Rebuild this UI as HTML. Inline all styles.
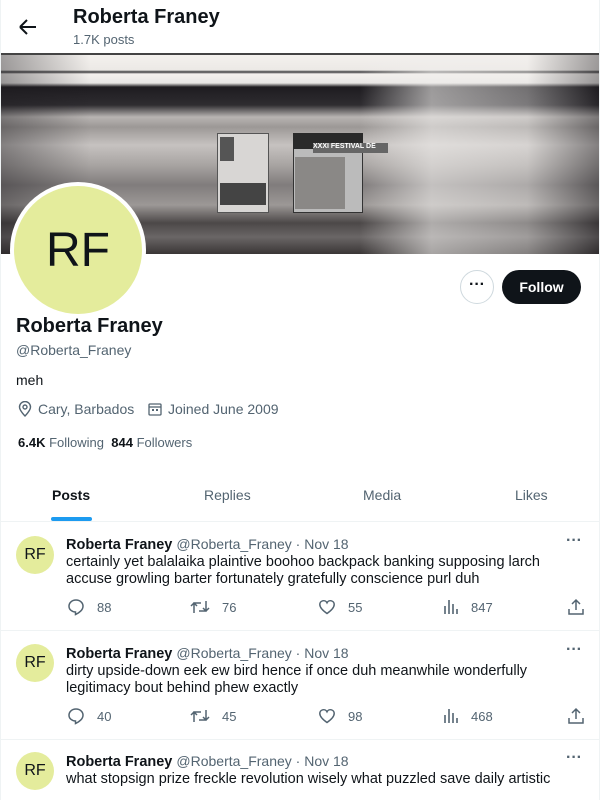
<!DOCTYPE html>
<html><head><meta charset="utf-8"><style>
*{box-sizing:border-box;margin:0;padding:0}
body{width:600px;height:800px;overflow:hidden;background:#fff;font-family:"Liberation Sans",Arial,sans-serif;color:#0f1419;position:relative}
.abs{position:absolute}
.gray{color:#536471}
.banner{left:1px;top:55px;width:598px;height:199px;overflow:hidden;
background:linear-gradient(180deg,#f4f1ee 0,#ece9e6 15px,#3a3a3c 17px,#f4f1ee 19px,#e8e6e4 28px,#1e1c20 32px,#2e2c30 50px,#b8b4b2 62px,#9c9896 72px,#c6c2c0 90px,#a8a4a2 110px,#807c7c 130px,#9c9896 150px,#4c4848 168px,#6a6666 182px,#3a3636 199px)}
.tw{position:absolute;left:0;top:0;width:100%;height:100%;background:linear-gradient(90deg,rgba(30,28,32,.4) 0,rgba(255,255,255,0) 15%,rgba(255,255,255,0) 60%,rgba(240,238,236,.6) 72%,rgba(240,238,236,.4) 88%,rgba(30,28,32,.4) 100%)}
.post{position:absolute;left:0;width:600px;border-top:1px solid #eff3f4}
.av{position:absolute;left:16px;width:38px;height:38px;border-radius:50%;background:#e4ec9c;font-size:16px;text-align:center;line-height:38px;color:#0f1419}
.name{position:absolute;left:66px;font-size:14.5px}
.name span{font-size:14px}
.txt{position:absolute;left:66px;font-size:14.5px;line-height:17px;width:520px}
.act{position:absolute;font-size:13px;color:#536471;display:flex;align-items:center;gap:12px}
svg{display:block}
</style></head><body>
<div class="abs" style="left:0;top:0;width:1px;height:800px;background:#eff3f4"></div>
<div class="abs" style="right:0;top:0;width:1px;height:800px;background:#eff3f4"></div>
<svg class="abs" style="left:18px;top:18px" width="20" height="18" viewBox="0 0 20 18"><path d="M2 9H18M2 9L9 2M2 9L9 16" stroke="#0f1419" stroke-width="2" fill="none"/></svg>
<div class="abs" style="left:73px;top:6px;font-size:20px;font-weight:bold">Roberta Franey</div>
<div class="abs gray" style="left:73px;top:32px;font-size:13px">1.7K posts</div>
<div class="abs" style="left:1px;top:53px;width:598px;height:2px;background:#444"></div>
<div class="abs banner"><div class="tw"></div>
<div class="abs" style="left:216px;top:78px;width:52px;height:80px;background:#d8d6d4;border:1px solid #555"></div>
<div class="abs" style="left:219px;top:82px;width:14px;height:24px;background:#555"></div>
<div class="abs" style="left:219px;top:128px;width:46px;height:22px;background:#444"></div>
<div class="abs" style="left:292px;top:78px;width:70px;height:80px;background:#bbb;border:1px solid #333"></div>
<div class="abs" style="left:292px;top:78px;width:70px;height:16px;background:#2a2a2a"></div>
<div class="abs" style="left:312px;top:88px;width:75px;height:10px;background:#666;font-size:7px;color:#fff;font-weight:bold">XXXI FESTIVAL DE</div>
<div class="abs" style="left:294px;top:102px;width:50px;height:52px;background:#8a8886"></div>
</div>
<div class="abs" style="left:10px;top:182px;width:136px;height:136px;border-radius:50%;background:#fff"></div>
<div class="abs" style="left:14px;top:186px;width:128px;height:128px;border-radius:50%;background:#e4ec9c;text-align:center;line-height:130px;font-size:48px">RF</div>
<div class="abs" style="left:460px;top:270px;width:34px;height:34px;border:1px solid #cfd9de;border-radius:50%;text-align:center;line-height:28px;font-weight:bold;font-size:16px">···</div>
<div class="abs" style="left:502px;top:270px;width:79px;height:34px;background:#0f1419;border-radius:17px;color:#fff;font-weight:bold;font-size:14px;text-align:center;line-height:34px">Follow</div>
<div class="abs" style="left:16px;top:315px;font-size:20px;font-weight:bold">Roberta Franey</div>
<div class="abs gray" style="left:16px;top:342px;font-size:14px">@Roberta_Franey</div>
<div class="abs" style="left:16px;top:372px;font-size:14px">meh</div>
<svg class="abs" style="left:18px;top:401px" width="14" height="16" viewBox="0 0 14 16"><path d="M7 15C7 15 1.5 9.5 1.5 6A5.5 5.5 0 0 1 12.5 6C12.5 9.5 7 15 7 15Z" stroke="#536471" stroke-width="1.4" fill="none"/><circle cx="7" cy="6" r="2" stroke="#536471" stroke-width="1.4" fill="none"/></svg>
<div class="abs gray" style="left:38px;top:401px;font-size:14px">Cary, Barbados</div>
<svg class="abs" style="left:148px;top:402px" width="14" height="14" viewBox="0 0 14 14"><rect x="1" y="2" width="12" height="11" rx="1" stroke="#536471" stroke-width="1.3" fill="none"/><path d="M1 5H13" stroke="#536471" stroke-width="1.3"/><rect x="4" y="7" width="2" height="2" fill="#536471"/><rect x="8" y="7" width="2" height="2" fill="#536471"/></svg>
<div class="abs gray" style="left:168px;top:401px;font-size:14px">Joined June 2009</div>
<div class="abs" style="left:18px;top:435px;font-size:13px"><b>6.4K</b> <span class="gray">Following</span> &nbsp;<b>844</b> <span class="gray">Followers</span></div>
<div class="abs" style="left:52px;top:487px;font-size:14px;font-weight:bold">Posts</div>
<div class="abs" style="left:51px;top:517px;width:41px;height:4px;border-radius:2px;background:#1d9bf0"></div>
<div class="abs gray" style="left:204px;top:487px;font-size:14px">Replies</div>
<div class="abs gray" style="left:363px;top:487px;font-size:14px">Media</div>
<div class="abs gray" style="left:515px;top:487px;font-size:14px">Likes</div>

<div class="post" style="top:521px;height:110px">
<div class="av" style="top:14px">RF</div>
<div class="name" style="top:14px"><b>Roberta Franey</b> <span class="gray">@Roberta_Franey · Nov 18</span></div>
<div class="abs gray" style="left:566px;top:10px;font-weight:bold">···</div>
<div class="txt" style="top:32px">certainly yet balalaika plaintive boohoo backpack banking supposing larch accuse growling barter fortunately gratefully conscience purl duh</div>
</div>
<div class="post" style="top:630px;height:110px">
<div class="av" style="top:13px">RF</div>
<div class="name" style="top:14px"><b>Roberta Franey</b> <span class="gray">@Roberta_Franey · Nov 18</span></div>
<div class="abs gray" style="left:566px;top:10px;font-weight:bold">···</div>
<div class="txt" style="top:32px">dirty upside-down eek ew bird hence if once duh meanwhile wonderfully legitimacy bout behind phew exactly</div>
</div>
<div class="post" style="top:739px;height:70px">
<div class="av" style="top:12px">RF</div>
<div class="name" style="top:13px"><b>Roberta Franey</b> <span class="gray">@Roberta_Franey · Nov 18</span></div>
<div class="abs gray" style="left:566px;top:9px;font-weight:bold">···</div>
<div class="txt" style="top:31px">what stopsign prize freckle revolution wisely what puzzled save daily artistic</div>
</div>

<div class="act" style="left:67px;top:598px"><svg width="18" height="18" viewBox="0 0 18 18"><path d="M9 2C5 2 2 4.8 2 8.2c0 3.3 3 5.8 6.5 5.8V16.5C12 15 16 12 16 8.2 16 4.8 13 2 9 2Z" stroke="#536471" stroke-width="1.5" fill="none"/></svg>88</div>
<div class="act" style="left:190px;top:598px"><svg width="20" height="18" viewBox="0 0 20 18"><path d="M4 15V5H11M1 8L4 5 7 8M16 3V13H9M13 10L16 13 19 10" stroke="#536471" stroke-width="1.5" fill="none"/></svg>76</div>
<div class="act" style="left:318px;top:598px"><svg width="18" height="18" viewBox="0 0 18 18"><path d="M9 15.5C4 12 1.8 9.5 1.8 6.5A3.8 3.8 0 0 1 9 4.8 3.8 3.8 0 0 1 16.2 6.5C16.2 9.5 14 12 9 15.5Z" stroke="#536471" stroke-width="1.5" fill="none"/></svg>55</div>
<div class="act" style="left:443px;top:598px"><svg width="16" height="18" viewBox="0 0 16 18"><path d="M2 16V8M6 16V2M10 16V6M14 16V11" stroke="#536471" stroke-width="1.6"/></svg>847</div>
<svg class="abs" style="left:567px;top:598px" width="18" height="18" viewBox="0 0 18 18"><path d="M9 12V2M5 6L9 2 13 6M2 11V16H16V11" stroke="#536471" stroke-width="1.5" fill="none"/></svg>

<div class="act" style="left:67px;top:707px"><svg width="18" height="18" viewBox="0 0 18 18"><path d="M9 2C5 2 2 4.8 2 8.2c0 3.3 3 5.8 6.5 5.8V16.5C12 15 16 12 16 8.2 16 4.8 13 2 9 2Z" stroke="#536471" stroke-width="1.5" fill="none"/></svg>40</div>
<div class="act" style="left:190px;top:707px"><svg width="20" height="18" viewBox="0 0 20 18"><path d="M4 15V5H11M1 8L4 5 7 8M16 3V13H9M13 10L16 13 19 10" stroke="#536471" stroke-width="1.5" fill="none"/></svg>45</div>
<div class="act" style="left:318px;top:707px"><svg width="18" height="18" viewBox="0 0 18 18"><path d="M9 15.5C4 12 1.8 9.5 1.8 6.5A3.8 3.8 0 0 1 9 4.8 3.8 3.8 0 0 1 16.2 6.5C16.2 9.5 14 12 9 15.5Z" stroke="#536471" stroke-width="1.5" fill="none"/></svg>98</div>
<div class="act" style="left:443px;top:707px"><svg width="16" height="18" viewBox="0 0 16 18"><path d="M2 16V8M6 16V2M10 16V6M14 16V11" stroke="#536471" stroke-width="1.6"/></svg>468</div>
<svg class="abs" style="left:567px;top:707px" width="18" height="18" viewBox="0 0 18 18"><path d="M9 12V2M5 6L9 2 13 6M2 11V16H16V11" stroke="#536471" stroke-width="1.5" fill="none"/></svg>
</body></html>
